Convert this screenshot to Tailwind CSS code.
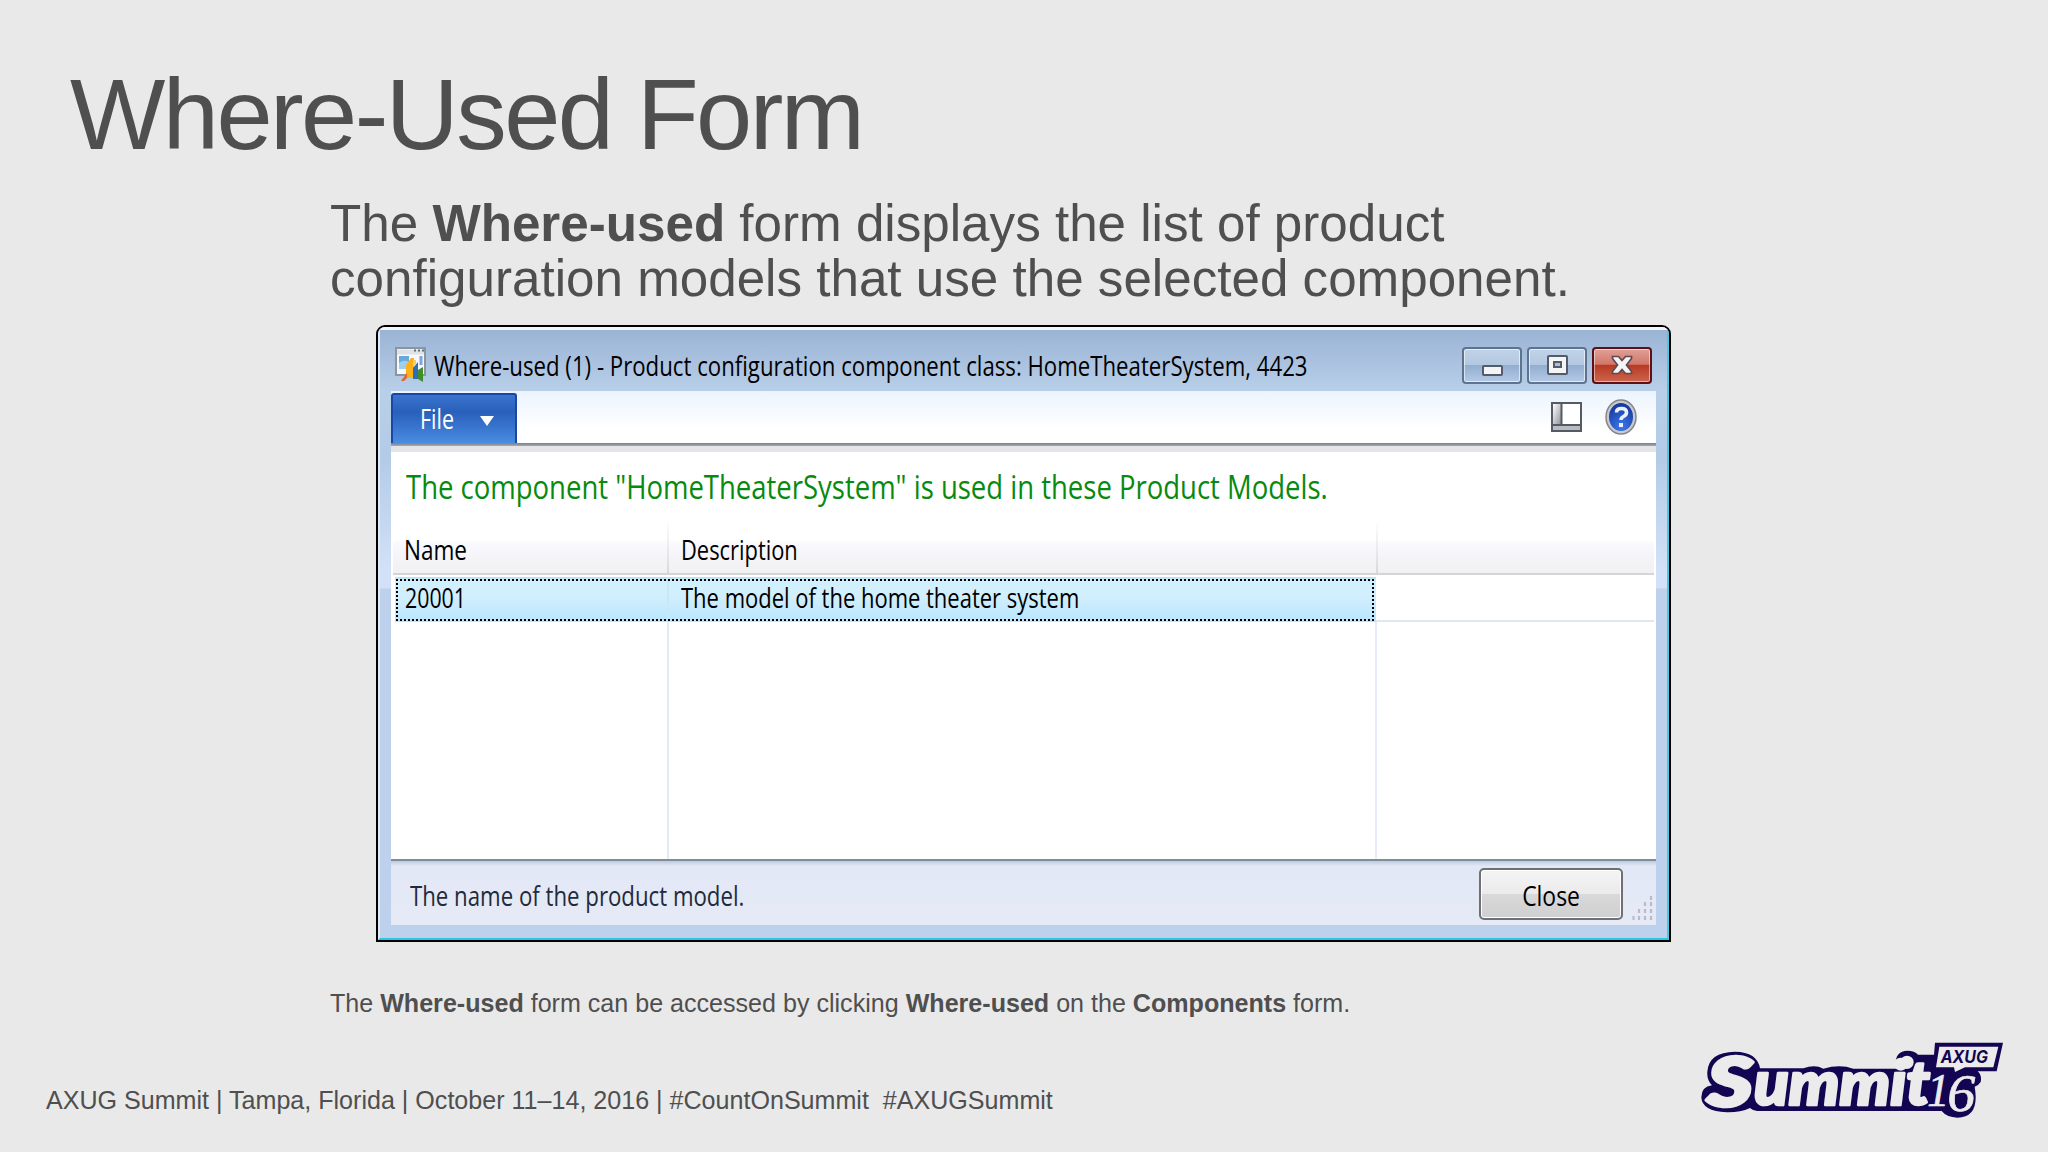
<!DOCTYPE html>
<html lang="en">
<head>
    <meta charset="UTF-8">
    <meta name="viewport" content="width=device-width, initial-scale=1.0">
    <title>Where-Used Form</title>
    <script src="https://cdn.jsdelivr.net/npm/@tailwindcss/browser@4"></script>
</head>
<body class="w-[2048px] h-[1152px] overflow-hidden bg-[#e9e9e9] text-[#4f4f4f] font-['Liberation_Sans',Arial,sans-serif]">
    <div class="relative h-full flex flex-col">
        <!-- Title -->
        <h1 class="pl-[70px] pt-[64px] text-[101px] leading-[100px] tracking-[-2.55px] whitespace-nowrap">Where-Used Form</h1>

        <!-- Intro -->
        <p class="pl-[330px] mt-[32px] text-[51.17px] leading-[55.3px] whitespace-nowrap">
            The <b>Where-used</b> form displays the list of product<br>
            configuration models that use the selected component.
        </p>

        <!-- Window -->
        <div class="ml-[376px] mt-[18px] w-[1295px] h-[617px] shrink-0 border-2 border-black rounded-t-[9px] bg-[#bdd0ec] overflow-hidden font-['Open_Sans','Noto_Sans',sans-serif] text-[27px] text-black whitespace-nowrap">
            <div class="h-full flex flex-col border-t-3 border-t-[#f2f6fb] border-l-2 border-l-[#dfe9f5] border-r-2 border-r-[#4cc8e2] border-b-2 border-b-[#2cc6e0] bg-[linear-gradient(#9ab4d5_0px,#b8cfe9_62px,#b4cbe8_130px,#d2e1f7_240px,#d2e1f7_258px,#bdd0ec_259px)]">
                <!-- Title bar -->
                <div class="h-[61px] shrink-0 flex items-start pl-[15px] pr-[15px] pt-[17px] bg-linear-to-b from-[#9ab4d5] to-[#b9cfe9]">
                    <svg class="w-[31px] h-[35px] shrink-0" viewBox="0 0 31 35">
                        <rect x="1" y="1" width="29" height="27" fill="#f6f8fb" stroke="#8c949e" stroke-width="2"/>
                        <path d="M2 5h27" stroke="#dde1e8" stroke-width="5"/>
                        <path d="M19 3.500h2M23 3.500h2M27 3.500h2" stroke="#626a76" stroke-width="2"/>
                        <rect x="4" y="9" width="10" height="13" fill="#6aa9dc"/>
                        <path d="M4 16q5-4 10-1v7H4z" fill="#9dd0f0"/>
                        <path d="M26 9v9" stroke="#7ba4e0" stroke-width="3"/>
                        <path d="M6 34l5-6V18l5-7h3v20h-8l-3 3z" fill="#fbb117"/>
                        <path d="M6 34l6-8v5l-3 3z" fill="#e5642a"/>
                        <path d="M18 21l5-6v17h-5z" fill="#2f6db5"/>
                        <path d="M18 13h3v4l-3 3z" fill="#f7cf5c"/>
                        <path d="M23 23l5-3v15l-5-3z" fill="#3f8f2b"/>
                    </svg>
                    <div class="w-[1026px] pl-[8px] leading-[38px]">
                        <span class="inline-block origin-left scale-x-[0.8226]">Where-used (1) - Product configuration component class: HomeTheaterSystem, 4423</span>
                    </div>
                    <div class="ml-auto flex gap-[5px]">
                        <div class="w-[60px] h-[37px] rounded-[4px] border-2 border-[#5d7390] ring-1 ring-inset ring-white/60 bg-[linear-gradient(#c2d3e8_0%,#b3c8e1_48%,#93aed0_50%,#b4cae6_100%)] flex items-end justify-center pb-[6px]">
                            <div class="w-[21px] h-[11px] border-2 border-[#515b69] rounded-[2px] bg-[#f4f4f4]"></div>
                        </div>
                        <div class="w-[60px] h-[37px] rounded-[4px] border-2 border-[#5d7390] ring-1 ring-inset ring-white/60 bg-[linear-gradient(#c2d3e8_0%,#b3c8e1_48%,#93aed0_50%,#b4cae6_100%)] flex items-center justify-center">
                            <svg class="w-[21px] h-[20px]" viewBox="0 0 21 20">
                                <rect x="1" y="1" width="19" height="18" rx="1" fill="#f4f4f4" stroke="#515b69" stroke-width="2"/>
                                <rect x="7" y="7" width="7" height="5" fill="#a9bfdc" stroke="#515b69" stroke-width="2"/>
                            </svg>
                        </div>
                        <div class="w-[60px] h-[37px] rounded-[4px] border-2 border-[#5a1218] ring-1 ring-inset ring-white/50 bg-[linear-gradient(#e0a097_0%,#d2776a_46%,#b93a22_50%,#cc6650_100%)] flex items-center justify-center">
                            <svg class="w-[22px] h-[20px]" viewBox="0 0 22 20">
                                <path d="M1.500 1.500h6l3.500 4 3.500-4h6v2l-5 6.500 5 6.500v2h-6L11 14.500l-3.500 4h-6v-2l5-6.500-5-6.500z" fill="#f4f4f4" stroke="#5e4a52" stroke-width="1.700"/>
                            </svg>
                        </div>
                    </div>
                </div>

                <!-- Client area -->
                <div class="ml-[11px] mr-[11px] h-[534px] shrink-0 flex flex-col bg-white">
                    <!-- Ribbon -->
                    <div class="h-[52px] flex bg-[linear-gradient(#ebf4fe,#ffffff_75%)] pt-[2px]">
                        <div class="w-[126px] h-[50px] rounded-t-[3px] border-2 border-b-0 border-[#1a46a6] bg-[linear-gradient(#3b74cd_0%,#2860bb_35%,#3570cb_60%,#4a8ce0_100%)] flex items-center text-white">
                            <span class="inline-block origin-left scale-x-[0.81] ml-[27px] w-[43px] text-[26.500px] leading-[30px]">File</span>
                            <div class="ml-[17px] mt-[4px] w-0 h-0 border-x-[7px] border-x-transparent border-t-[10px] border-t-white"></div>
                        </div>
                        <div class="ml-auto flex items-start pt-[8px] pr-[19px] gap-[23px]">
                            <svg class="w-[31px] h-[30px] mt-[1px]" viewBox="0 0 31 30">
                                <defs>
                                    <linearGradient id="pane" x1="0" y1="0" x2="1" y2="1">
                                        <stop offset="0" stop-color="#ffffff"/>
                                        <stop offset="1" stop-color="#8f9097"/>
                                    </linearGradient>
                                </defs>
                                <rect x="1" y="1" width="29" height="28" fill="#fff" stroke="#555b62" stroke-width="2"/>
                                <rect x="2" y="2" width="8" height="21" fill="url(#pane)"/>
                                <rect x="2" y="24" width="27" height="4" fill="#b9bbc2"/>
                                <path d="M10.500 2v21M2 23h27" stroke="#555b62" stroke-width="2"/>
                            </svg>
                            <svg class="w-[32px] h-[36px] -mt-[2px]" viewBox="0 0 32 36">
                                <defs>
                                    <radialGradient id="ball" cx=".5" cy=".85" r=".8">
                                        <stop offset="0" stop-color="#3d78ee"/>
                                        <stop offset="1" stop-color="#173a9e"/>
                                    </radialGradient>
                                </defs>
                                <ellipse cx="16" cy="18" rx="15" ry="17" fill="#c9cacf" stroke="#85868c" stroke-width="1.500"/>
                                <ellipse cx="16" cy="18" rx="12" ry="14" fill="url(#ball)"/>
                                <path d="M11.500 13.500q0-4 5-4t5 4q0 2.500-3 4-2.500 1.200-2.500 3.500" fill="none" stroke="#e9f0ff" stroke-width="3.600"/>
                                <path d="M14 24h4v4h-4z" fill="#e9f0ff"/>
                            </svg>
                        </div>
                    </div>
                    <div class="h-[3px] bg-linear-to-b from-[#7b8087] to-[#a7abb0]"></div>
                    <div class="h-[6px] bg-[#e3e5e9]"></div>

                    <!-- Message -->
                    <div class="h-[68px] pl-[15px] leading-[69px] text-[33px] text-[#078a0f]">
                        <span class="inline-block origin-left scale-x-[0.833]">The component "HomeTheaterSystem" is used in these Product Models.</span>
                    </div>

                    <!-- Grid -->
                    <div class="mx-[2px] h-[55px] flex border-b-2 border-[#d4d5d6] bg-[linear-gradient(#ffffff_35%,#f7f7fd_50%,#f1f1f1_100%)] leading-[60px]">
                        <div class="w-[274px] pl-[11px]"><span class="inline-block origin-left scale-x-[0.835]">Name</span></div>
                        <div class="w-[2px] bg-linear-to-b from-white to-[#d9d9dc]"></div>
                        <div class="w-[707px] pl-[12px]"><span class="inline-block origin-left scale-x-[0.81]">Description</span></div>
                        <div class="w-[2px] bg-linear-to-b from-white to-[#d9d9dc]"></div>
                    </div>
                    <div class="mx-[2px] h-[47px] flex">
                        <div class="w-[983px] pl-[2px] pt-[2px]">
                            <div class="relative h-[45px] flex bg-[linear-gradient(#b2e1f6_0%,#d0effe_10%,#d3effd_40%,#bae7fe_95%)] leading-[41px]">
                                <div class="absolute left-[1px] right-[2px] top-[2px] bottom-[1px] border-2 border-dotted border-black"></div>
                                <div class="w-[274px] pl-[10px] border-r-2 border-[#c9e8f6]"><span class="inline-block origin-left scale-x-[0.79]">20001</span></div>
                                <div class="pl-[12px]"><span class="inline-block origin-left scale-x-[0.814]">The model of the home theater system</span></div>
                            </div>
                        </div>
                        <div class="flex-1 border-b-2 border-[#e1e8ec]"></div>
                    </div>
                    <div class="mx-[2px] flex-1 flex">
                        <div class="w-[276px] border-r-2 border-[#e2ebf8]"></div>
                        <div class="w-[708px] border-r-2 border-[#e6eafb]"></div>
                    </div>

                    <!-- Status bar -->
                    <div class="h-[66px] border-t-2 border-[#7f8d9b] bg-[linear-gradient(#bccbdd_0px,#e3e8f6_5px,#e6eaf6_100%)] flex pl-[19px] pr-[2px]">
                        <div class="leading-[69px] text-[#232a38]"><span class="inline-block origin-left scale-x-[0.823]">The name of the product model.</span></div>
                        <div class="ml-auto mt-[7px] w-[144px] h-[52px] rounded-[5px] border-2 border-[#6e7074] ring-1 ring-inset ring-white bg-[linear-gradient(#f4f4f4_0%,#ebebeb_49%,#d9d9da_51%,#cfcfd1_100%)] leading-[51px] text-center">
                            <span class="inline-block scale-x-[0.849]">Close</span>
                        </div>
                        <svg class="ml-[9px] mt-[33px] w-[22px] h-[28px]" viewBox="0 0 22 28">
                            <path d="M19 2v4M19 8v4M19 15v4M19 22v4M13 8v4M13 15v4M13 22v4M7 15v4M7 22v4M1.500 22v4" stroke="#b9bbc9" stroke-width="2.200"/>
                        </svg>
                    </div>
                </div>
            </div>
        </div>

        <!-- Note -->
        <p class="pl-[330px] mt-[46px] text-[25.09px] leading-[30px] whitespace-nowrap">The <b>Where-used</b> form can be accessed by clicking <b>Where-used</b> on the <b>Components</b> form.</p>

        <!-- Footer -->
        <footer class="pl-[46px] mt-[67px] text-[25.09px] leading-[30px] whitespace-pre">AXUG Summit | Tampa, Florida | October 11–14, 2016 | #CountOnSummit  #AXUGSummit</footer>

        <!-- Event logo -->
        <svg class="absolute left-[1680px] top-[1020px] w-[340px] h-[120px]" viewBox="0 0 1020 360">
            <path d="M82 155Q86 96 165 95Q232 96 240 145H370Q405 132 430 146Q480 132 520 146H648Q640 94 682 92Q704 92 714 104H762L765 68H969L950 154H893Q906 165 902 186Q896 196 884 200Q900 293 832 293Q800 292 785 273H232Q218 272 210 264Q180 278 140 277Q66 274 64 232Q64 200 96 196Q80 180 82 155Z" fill="#130552"/>
            <g font-family="Lato, sans-serif" font-weight="900" font-style="italic" fill="#ebebeb" stroke="#ebebeb" stroke-linejoin="round">
                <text x="82" y="257" font-size="202" stroke-width="11" textLength="136" lengthAdjust="spacingAndGlyphs">S</text>
                <text x="222" y="256" font-size="180" stroke-width="8" textLength="528" lengthAdjust="spacingAndGlyphs">ummit</text>
            </g>
            <circle cx="681" cy="127" r="20" fill="#ebebeb"/>
            <path d="M778 80H955L940 142H855L825 156L822 142H768Z" fill="#ebebeb"/>
            <g font-family="Liberation Serif, serif" font-style="italic" fill="#ebebeb" stroke="#ebebeb" stroke-width="2">
                <text x="742" y="258" font-size="138" textLength="66" lengthAdjust="spacingAndGlyphs">1</text>
                <text x="802" y="272" font-size="156" textLength="84" lengthAdjust="spacingAndGlyphs">6</text>
            </g>
            <text x="782" y="129" font-family="Inter, sans-serif" font-weight="700" font-style="italic" font-size="50" fill="#130552" textLength="142" lengthAdjust="spacingAndGlyphs">AXUG</text>
        </svg>
    </div>
</body>
</html>
